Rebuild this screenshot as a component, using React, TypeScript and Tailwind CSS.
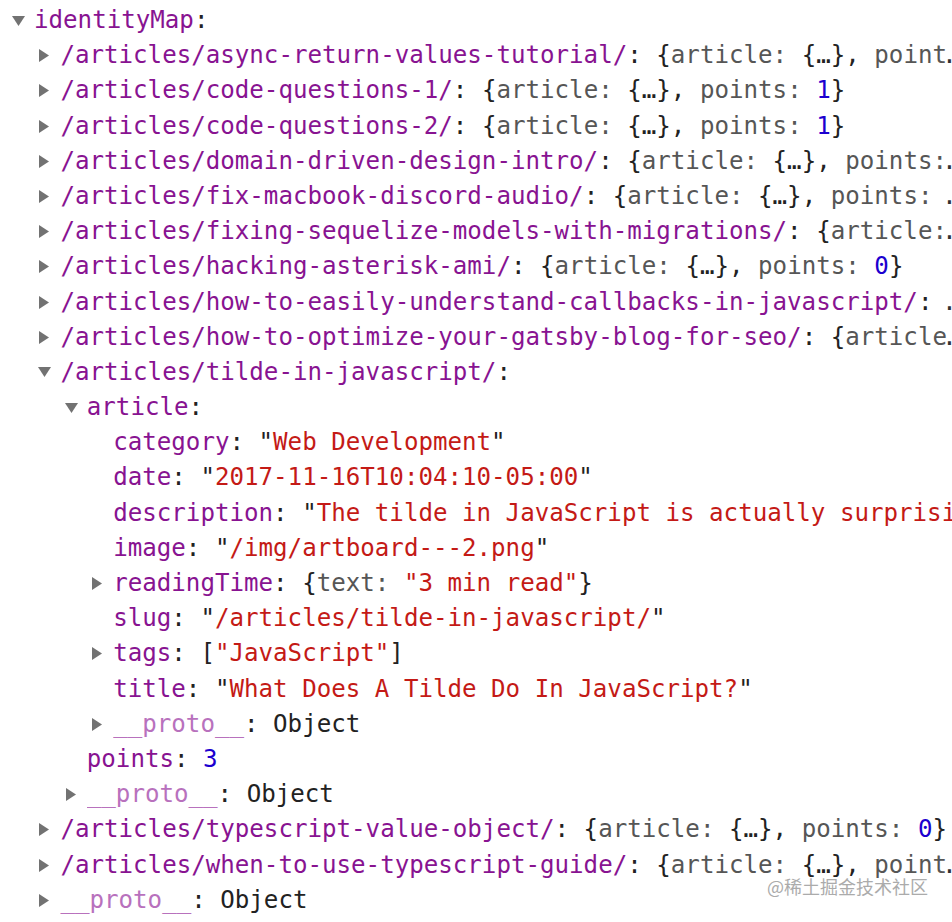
import React from 'react';

type Seg = { t: string; c: string };
type Row = { level: number; arrow?: 'open' | 'closed'; segs: Seg[]; clip?: boolean };

const KEY = 'text-[#881391]';
const DIM = 'text-[#b871bd]';
const PUNCT = 'text-[#222222]';
const NAME = 'text-[#565656]';
const STR = 'text-[#c41a16]';
const NUM = 'text-[#1c00cf]';

const k = (t: string): Seg => ({ t, c: KEY });
const p = (t: string): Seg => ({ t, c: PUNCT });
const n = (t: string): Seg => ({ t, c: NAME });
const s = (t: string): Seg => ({ t, c: STR });
const num = (t: string): Seg => ({ t, c: NUM });

// collapsed article entry: /articles/slug/: {article: {…}, points: N}
const entry = (path: string, points: string): Row => ({
  level: 1,
  arrow: 'closed',
  segs: [k(path), p(': {'), n('article:'), p(' {…}, '), n('points:'), p(' '), num(points), p('}')],
});

const prop = (level: number, name: string, value: string): Row => ({
  level,
  segs: [k(name), p(': "'), s(value), p('"')],
});

const rows: Row[] = [
  { level: 0, arrow: 'open', segs: [k('identityMap'), p(':')] },
  entry('/articles/async-return-values-tutorial/', '2'),
  entry('/articles/code-questions-1/', '1'),
  entry('/articles/code-questions-2/', '1'),
  entry('/articles/domain-driven-design-intro/', '2'),
  entry('/articles/fix-macbook-discord-audio/', '1'),
  entry('/articles/fixing-sequelize-models-with-migrations/', '1'),
  entry('/articles/hacking-asterisk-ami/', '0'),
  entry('/articles/how-to-easily-understand-callbacks-in-javascript/', '1'),
  entry('/articles/how-to-optimize-your-gatsby-blog-for-seo/', '1'),
  { level: 1, arrow: 'open', segs: [k('/articles/tilde-in-javascript/'), p(':')] },
  { level: 2, arrow: 'open', segs: [k('article'), p(':')] },
  prop(3, 'category', 'Web Development'),
  prop(3, 'date', '2017-11-16T10:04:10-05:00'),
  {
    ...prop(3, 'description', 'The tilde in JavaScript is actually surprisingly useful'),
    clip: true,
  },
  prop(3, 'image', '/img/artboard---2.png'),
  {
    level: 3,
    arrow: 'closed',
    segs: [k('readingTime'), p(': {'), n('text:'), p(' '), s('"3 min read"'), p('}')],
  },
  prop(3, 'slug', '/articles/tilde-in-javascript/'),
  { level: 3, arrow: 'closed', segs: [k('tags'), p(': ['), s('"JavaScript"'), p(']')] },
  prop(3, 'title', 'What Does A Tilde Do In JavaScript?'),
  { level: 3, arrow: 'closed', segs: [{ t: '__proto__', c: DIM }, p(': Object')] },
  { level: 2, segs: [k('points'), p(': '), num('3')] },
  { level: 2, arrow: 'closed', segs: [{ t: '__proto__', c: DIM }, p(': Object')] },
  entry('/articles/typescript-value-object/', '0'),
  entry('/articles/when-to-use-typescript-guide/', '1'),
  { level: 1, arrow: 'closed', segs: [{ t: '__proto__', c: DIM }, p(': Object')] },
];

const Arrow = ({ open }: { open: boolean }) =>
  open ? (
    <svg width="13" height="10" viewBox="0 0 13 10" className="block">
      <path d="M0 0 L13 0 L6.5 10 Z" fill="#727272" />
    </svg>
  ) : (
    <svg width="10" height="13" viewBox="0 0 10 13" className="block ml-px">
      <path d="M0 0 L10 6.5 L0 13 Z" fill="#727272" />
    </svg>
  );

export default function App() {
  return (
    <div className="relative w-[952px] h-[922px] overflow-hidden bg-white">
      <div className="w-[968px] pt-[3px] font-['DejaVu_Sans_Mono',monospace] text-[24.15px]">
        {rows.map((row, i) => (
          <div
            key={i}
            className="flex items-center h-[35.2px]"
            style={{ paddingLeft: 12 + row.level * 26.4 }}
          >
            <span className="w-[22px] shrink-0 flex items-center">
              {row.arrow && <Arrow open={row.arrow === 'open'} />}
            </span>
            <span
              className={`min-w-0 flex-1 whitespace-pre overflow-hidden leading-[35.2px] text-[#303030] ${
                row.clip ? 'text-clip' : 'text-ellipsis'
              }`}
            >
              {row.segs.map((seg, j) => (
                <span key={j} className={seg.c}>
                  {seg.t}
                </span>
              ))}
            </span>
          </div>
        ))}
      </div>

      {/* watermark */}
      <div className="absolute left-[767px] top-[877px] text-[18px] leading-[18px] text-[#ababab] font-['Noto_Sans_CJK_SC',sans-serif]">
        @稀土掘金技术社区
      </div>
    </div>
  );
}
